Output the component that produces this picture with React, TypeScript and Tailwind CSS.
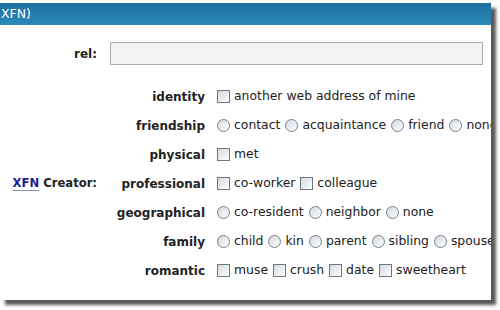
import React from "react";

const Check = () => (
  <span className="inline-block w-[13px] h-[13px] shrink-0 border border-[#6f7780] bg-gradient-to-br from-[#d3d9df] to-[#ffffff]" />
);

const Radio = () => (
  <span className="inline-block w-[13px] h-[13px] shrink-0 rounded-full border border-[#75808b] bg-gradient-to-br from-[#d3d9df] to-[#ffffff]" />
);

type Row = { label: string; kind: "c" | "r"; items: string[] };

const rows: Row[] = [
  { label: "identity", kind: "c", items: ["another web address of mine"] },
  { label: "friendship", kind: "r", items: ["contact", "acquaintance", "friend", "none"] },
  { label: "physical", kind: "c", items: ["met"] },
  { label: "professional", kind: "c", items: ["co-worker", "colleague"] },
  { label: "geographical", kind: "r", items: ["co-resident", "neighbor", "none"] },
  { label: "family", kind: "r", items: ["child", "kin", "parent", "sibling", "spouse"] },
  { label: "romantic", kind: "c", items: ["muse", "crush", "date", "sweetheart"] },
];

export default function App() {
  return (
    <div
      className="w-[500px] h-[310px] bg-white overflow-hidden pt-[3px] text-[#222]"
      style={{ fontFamily: '"DejaVu Sans", Verdana, sans-serif' }}
    >
      <div className="w-[491px] h-[297px] bg-white shadow-[5px_5px_3px_rgba(0,0,0,0.65)] overflow-hidden flex flex-col">
        <div className="h-[22px] shrink-0 flex items-center bg-gradient-to-b from-[#1d6ea1] to-[#2b8abb] text-white text-[12.5px] pl-[1px]">
          XFN)
        </div>
        <div className="flex items-center mt-[17px] h-[23px]">
          <div className="w-[97px] text-right font-bold text-[12px]">rel:</div>
          <div className="ml-[13px] w-[373px] h-[23px] border border-[#ababab] bg-[#f2f2f2]" />
        </div>
        <div className="flex mt-[17px]">
          <div className="w-[97px] shrink-0 flex items-center justify-end font-bold text-[11.6px]">
            <span>
              <span className="text-[#1c1c8f] underline decoration-[#7d8fb5] underline-offset-[3px]">XFN</span>{" "}
              Creator:
            </span>
          </div>
          <div className="flex flex-col">
            {rows.map((row) => (
              <div key={row.label} className="flex items-center h-[29px]">
                <div className="w-[108px] shrink-0 text-right font-bold text-[12px]">{row.label}</div>
                <div className="ml-[12px] flex items-center gap-[5px] whitespace-nowrap text-[12.4px]">
                  {row.items.map((it) => (
                    <span key={it} className="flex items-center gap-[4px]">
                      {row.kind === "c" ? <Check /> : <Radio />}
                      <span>{it}</span>
                    </span>
                  ))}
                </div>
              </div>
            ))}
          </div>
        </div>
      </div>
    </div>
  );
}
